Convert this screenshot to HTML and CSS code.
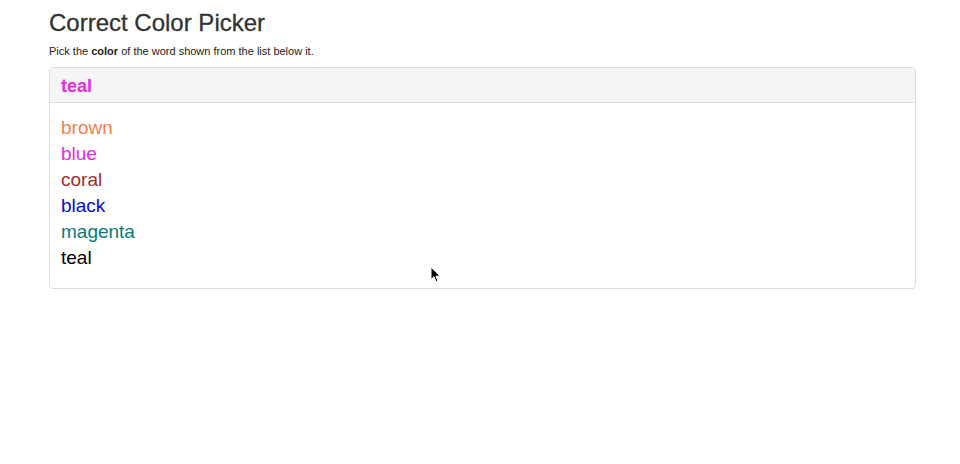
FILE: index.html
```html
<!DOCTYPE html>
<html>
<head>
<meta charset="utf-8">
<title>Correct Color Picker</title>
<link rel="stylesheet" href="styles.css">
</head>
<body>
<div class="container">
  <h1 class="title">Correct Color Picker</h1>
  <p class="lead">Pick the <b>color</b> of the word shown from the list below it.</p>
  <div class="panel">
    <div class="panel-heading"><span class="word c-magenta">teal</span></div>
    <div class="panel-body">
      <ul class="choices">
        <li class="c-coral">brown</li>
        <li class="c-magenta">blue</li>
        <li class="c-brown">coral</li>
        <li class="c-blue">black</li>
        <li class="c-teal">magenta</li>
        <li class="c-black">teal</li>
      </ul>
    </div>
  </div>
</div>
<svg class="cursor" width="12" height="18" viewBox="0 0 12 18" xmlns="http://www.w3.org/2000/svg">
  <path d="M1 1 L1 13.5 L4 10.8 L6.2 15.8 L8 15 L5.9 10.2 L10 10.2 Z" fill="#000" stroke="#fff" stroke-width="1" stroke-linejoin="round"/>
</svg>
</body>
</html>
```
FILE: styles.css
```css
html, body {
  margin: 0;
  padding: 0;
  background: #fff;
}
body {
  font-family: "Liberation Sans", Arial, Helvetica, sans-serif;
  color: #333;
  position: relative;
  min-height: 464px;
}
.container {
  margin-left: 49px;
  width: 867px;
}
.title {
  font-size: 24px;
  font-weight: normal;
  line-height: 1.1;
  margin: 10px 0 0;
  color: #333;
  -webkit-text-stroke: 0.3px #333;
}
.lead {
  font-size: 11px;
  line-height: 17px;
  margin: 7px 0 7px;
  color: #222;
}
.panel {
  border: 1px solid #ddd;
  border-radius: 4px;
  overflow: hidden;
}
.panel-heading {
  background: #f5f5f5;
  border-bottom: 1px solid #ddd;
  padding: 7px 11px 5px;
  height: 22px;
}
.word {
  font-size: 18px;
  font-weight: bold;
  line-height: 22px;
}
.panel-body {
  padding: 12px 11px 17px;
}
.choices {
  list-style: none;
  margin: 0;
  padding: 0;
}
.choices li {
  font-size: 19px;
  line-height: 26px;
}
.c-coral { color: #f07f4f; }
.c-magenta { color: #e52be5; }
.c-brown { color: #9e2d2a; }
.c-blue { color: #0a0ad0; }
.c-teal { color: #0d7a7a; }
.c-black { color: #000; }
.cursor {
  position: absolute;
  left: 430px;
  top: 266px;
}
```
